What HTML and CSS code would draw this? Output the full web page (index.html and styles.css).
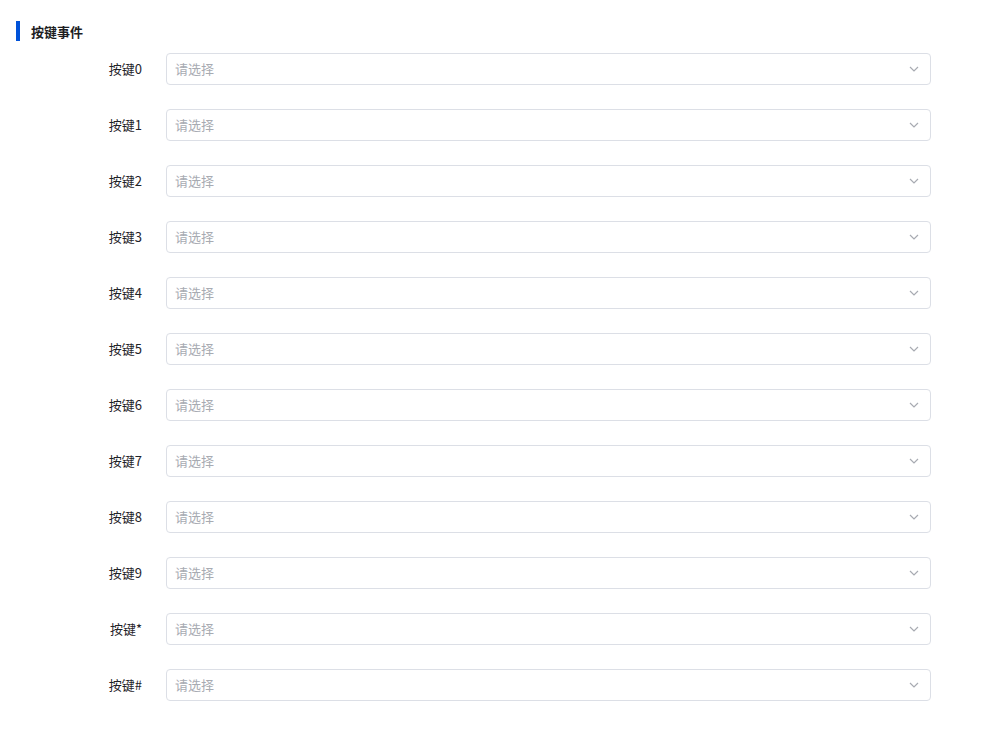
FILE: index.html
```html
<!DOCTYPE html>
<html lang="zh">
<head>
<meta charset="utf-8">
<link rel="stylesheet" href="styles.css">
</head>
<body>
<div class="page">
  <div class="section-title"><span class="bar"></span><span class="title-text">按键事件</span></div>
  <div class="form">
    <div class="row"><label class="label">按键0</label><div class="select"><span class="ph">请选择</span><svg class="arrow" viewBox="0 0 10 6"><path d="M1 1l4 4 4-4" fill="none" stroke="currentColor" stroke-width="1.2"/></svg></div></div>
    <div class="row"><label class="label">按键1</label><div class="select"><span class="ph">请选择</span><svg class="arrow" viewBox="0 0 10 6"><path d="M1 1l4 4 4-4" fill="none" stroke="currentColor" stroke-width="1.2"/></svg></div></div>
    <div class="row"><label class="label">按键2</label><div class="select"><span class="ph">请选择</span><svg class="arrow" viewBox="0 0 10 6"><path d="M1 1l4 4 4-4" fill="none" stroke="currentColor" stroke-width="1.2"/></svg></div></div>
    <div class="row"><label class="label">按键3</label><div class="select"><span class="ph">请选择</span><svg class="arrow" viewBox="0 0 10 6"><path d="M1 1l4 4 4-4" fill="none" stroke="currentColor" stroke-width="1.2"/></svg></div></div>
    <div class="row"><label class="label">按键4</label><div class="select"><span class="ph">请选择</span><svg class="arrow" viewBox="0 0 10 6"><path d="M1 1l4 4 4-4" fill="none" stroke="currentColor" stroke-width="1.2"/></svg></div></div>
    <div class="row"><label class="label">按键5</label><div class="select"><span class="ph">请选择</span><svg class="arrow" viewBox="0 0 10 6"><path d="M1 1l4 4 4-4" fill="none" stroke="currentColor" stroke-width="1.2"/></svg></div></div>
    <div class="row"><label class="label">按键6</label><div class="select"><span class="ph">请选择</span><svg class="arrow" viewBox="0 0 10 6"><path d="M1 1l4 4 4-4" fill="none" stroke="currentColor" stroke-width="1.2"/></svg></div></div>
    <div class="row"><label class="label">按键7</label><div class="select"><span class="ph">请选择</span><svg class="arrow" viewBox="0 0 10 6"><path d="M1 1l4 4 4-4" fill="none" stroke="currentColor" stroke-width="1.2"/></svg></div></div>
    <div class="row"><label class="label">按键8</label><div class="select"><span class="ph">请选择</span><svg class="arrow" viewBox="0 0 10 6"><path d="M1 1l4 4 4-4" fill="none" stroke="currentColor" stroke-width="1.2"/></svg></div></div>
    <div class="row"><label class="label">按键9</label><div class="select"><span class="ph">请选择</span><svg class="arrow" viewBox="0 0 10 6"><path d="M1 1l4 4 4-4" fill="none" stroke="currentColor" stroke-width="1.2"/></svg></div></div>
    <div class="row"><label class="label">按键*</label><div class="select"><span class="ph">请选择</span><svg class="arrow" viewBox="0 0 10 6"><path d="M1 1l4 4 4-4" fill="none" stroke="currentColor" stroke-width="1.2"/></svg></div></div>
    <div class="row"><label class="label">按键#</label><div class="select"><span class="ph">请选择</span><svg class="arrow" viewBox="0 0 10 6"><path d="M1 1l4 4 4-4" fill="none" stroke="currentColor" stroke-width="1.2"/></svg></div></div>
  </div>
</div>
</body>
</html>
```

FILE: styles.css
```css
* { box-sizing: border-box; }
html, body { margin: 0; padding: 0; background: #fff; }
body {
  font-family: "Noto Sans CJK SC", "Noto Sans", sans-serif;
  font-size: 13px;
  color: #303133;
}
.page {
  padding: 21px 59px 0 16px;
}
.section-title {
  display: flex;
  align-items: center;
  height: 20px;
  margin-bottom: 12px;
}
.bar {
  width: 4px;
  height: 20px;
  background: #0052d9;
}
.title-text {
  margin-left: 11px;
  font-weight: bold;
  font-size: 13px;
  color: #1d1d1f;
}
.form {
  display: flex;
  flex-direction: column;
  gap: 24px;
}
.row {
  display: flex;
  align-items: center;
  height: 32px;
}
.label {
  width: 126px;
  text-align: right;
  color: #1f2329;
  font-size: 13px;
  margin-bottom: 2px;
}
.select {
  flex: 1;
  margin-left: 24px;
  height: 32px;
  border: 1px solid #dcdfe6;
  border-radius: 4px;
  display: flex;
  align-items: center;
  justify-content: space-between;
  padding: 0 11px 2px 8px;
}
.ph {
  color: #a8abb2;
  font-size: 13px;
}
.arrow {
  width: 10px;
  height: 6px;
  color: #a8abb2;
  margin-top: 2px;
}
```
